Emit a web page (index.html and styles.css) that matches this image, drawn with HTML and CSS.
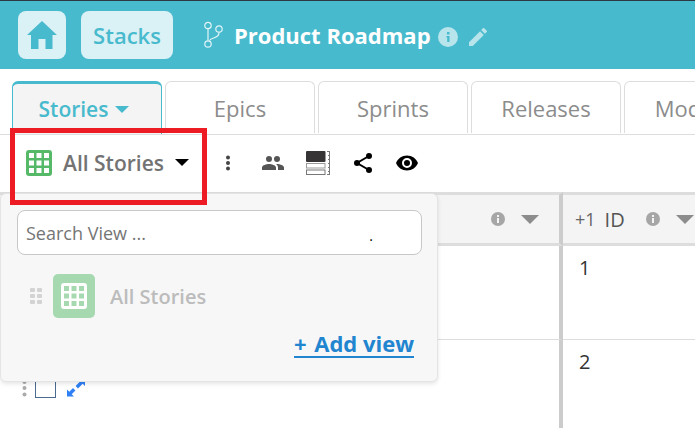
FILE: index.html
```html
<!DOCTYPE html>
<html lang="en">
<head>
  <meta charset="UTF-8">
  <title>Product Roadmap</title>
  <meta name="viewport" content="width=device-width, initial-scale=1.0">
  <link rel="stylesheet" href="styles.css">
</head>
<body>
  <header class="topbar">
    <button class="top-btn home-btn" aria-label="Home">
      <svg width="30" height="28" viewBox="0 0 30 28"><path fill="#48bacd" d="M15 0 L30 14 H25.500 V28 H18.500 V18 H11.500 V28 H4 V14 H0 Z"/></svg>
    </button>
    <button class="top-btn stacks-btn">Stacks</button>
    <svg class="branch" width="21" height="28" viewBox="0 0 21 28" fill="none" stroke="#e2f5f8" stroke-width="1.200">
      <circle cx="5" cy="4.500" r="3.200"/><circle cx="16" cy="8" r="3.200"/><circle cx="5" cy="23" r="3.200"/>
      <path d="M5 8 V19.500 M6.500 19.500 C8.500 16 16 18 16 11.500"/>
    </svg>
    <h1 class="title">Product Roadmap</h1>
    <button class="icon-btn info-btn" aria-label="Info">
      <svg width="20" height="20" viewBox="0 0 20 20"><circle cx="10" cy="10" r="10" fill="#b8e4eb"/><path fill="#48bacd" d="M9 5h2.500v2.500H9z M8.500 9h3v6H9.200v-4.500h-.7z"/></svg>
    </button>
    <button class="icon-btn" aria-label="Rename">
      <svg width="18" height="18" viewBox="3 3 18 18"><path fill="#b8e4eb" d="M3 17.250V21h3.750L17.810 9.940l-3.750-3.750L3 17.250zM20.710 7.040a1 1 0 0 0 0-1.410l-2.340-2.340a1 1 0 0 0-1.410 0l-1.830 1.830 3.750 3.750 1.830-1.830z"/></svg>
    </button>
  </header>

  <nav class="tabs">
    <button class="tab active">Stories <span class="caret"></span></button>
    <button class="tab">Epics</button>
    <button class="tab">Sprints</button>
    <button class="tab">Releases</button>
    <button class="tab">Modules</button>
  </nav>

  <div class="toolbar">
    <button class="view-btn">
      <svg width="26" height="26" viewBox="0 0 26 26"><rect width="26" height="26" rx="3" fill="#56b968"/><path fill="#fff" d="M3 3h5v5H3zM10.500 3h5v5h-5zM18 3h5v5h-5zM3 10.500h5v5H3zM10.500 10.500h5v5h-5zM18 10.500h5v5h-5zM3 18h5v5H3zM10.500 18h5v5h-5zM18 18h5v5h-5z"/></svg>
      <span>All Stories</span>
      <span class="caret"></span>
    </button>
    <div class="tools">
      <button class="icon-btn" aria-label="More">
        <svg width="24" height="24" viewBox="0 0 24 24" fill="#444"><circle cx="12" cy="6.500" r="2"/><circle cx="12" cy="12" r="2"/><circle cx="12" cy="17.500" r="2"/></svg>
      </button>
      <button class="icon-btn" aria-label="Members">
        <svg width="24" height="24" viewBox="0 0 24 24" fill="#555"><path d="M16 11a3 3 0 1 0 0-6 3 3 0 0 0 0 6zM8 11a3 3 0 1 0 0-6 3 3 0 0 0 0 6zM8 13c-2.330 0-7 1.170-7 3.500V19h14v-2.500C15 14.170 10.330 13 8 13zM16 13c-.29 0-.62.020-.97.050 1.160.84 1.970 1.970 1.970 3.450V19h6v-2.500c0-2.330-4.670-3.500-7-3.500z"/></svg>
      </button>
      <button class="icon-btn" aria-label="Row height">
        <svg width="24" height="24" viewBox="0 0 24 24"><rect width="19.500" height="11" rx="1" fill="#373435"/><rect x=".5" y="12.500" width="18.500" height="4.500" fill="#fff" stroke="#999"/><rect x=".5" y="19" width="18.500" height="4.500" fill="#fff" stroke="#777"/><path stroke="#777" fill="none" d="M23.500 0V24M21 .5h3M21 23.500h3M22 4.500h2M22 8.500h2M22 12.500h2M22 16.500h2M22 20.500h2"/></svg>
      </button>
      <button class="icon-btn" aria-label="Share">
        <svg width="24" height="24" viewBox="0 0 24 24"><path d="M18 5 L6 12 L18 19" fill="none" stroke="#000" stroke-width="2"/><circle cx="18" cy="5" r="3"/><circle cx="6" cy="12" r="3"/><circle cx="18" cy="19" r="3"/></svg>
      </button>
      <button class="icon-btn" aria-label="Visibility">
        <svg width="22" height="22" viewBox="1 1 22 22"><path d="M12 4.500C7 4.500 2.730 7.610 1 12c1.730 4.390 6 7.500 11 7.500s9.270-3.110 11-7.500c-1.730-4.390-6-7.500-11-7.500zM12 17a5 5 0 1 1 0-10 5 5 0 0 1 0 10zm0-8a3 3 0 1 0 0 6 3 3 0 0 0 0-6z"/></svg>
      </button>
    </div>

    <div class="view-menu">
      <div class="search">
        <input type="text" class="search-input" placeholder="Search View ..." aria-label="Search View">
        <span class="search-mark">.</span>
      </div>
      <div class="view-item">
        <svg class="grip" width="12" height="16" viewBox="0 0 12 16" fill="#d3d3d3"><rect width="5" height="4" rx="1"/><rect x="7" width="5" height="4" rx="1"/><rect y="6" width="5" height="4" rx="1"/><rect x="7" y="6" width="5" height="4" rx="1"/><rect y="12" width="5" height="4" rx="1"/><rect x="7" y="12" width="5" height="4" rx="1"/></svg>
        <span class="view-icon">
          <svg width="26" height="26" viewBox="0 0 26 26"><rect width="26" height="26" rx="3" fill="#fff"/><path fill="#a7d9b1" d="M3 3h5v5H3zM10.500 3h5v5h-5zM18 3h5v5h-5zM3 10.500h5v5H3zM10.500 10.500h5v5h-5zM18 10.500h5v5h-5zM3 18h5v5H3zM10.500 18h5v5h-5zM18 18h5v5h-5z"/></svg>
        </span>
        <span>All Stories</span>
      </div>
      <a class="add-view" href="#"><span class="plus">+</span> Add view</a>
    </div>
    <div class="highlight"></div>
  </div>

  <table class="grid">
    <thead>
      <tr>
        <th class="main-col">
          <div class="head">
            <svg width="14" height="14" viewBox="0 0 14 14"><circle cx="7" cy="7" r="7" fill="#a6a6a6"/><path fill="#f4f4f4" d="M6 3h2v2H6zM6 6h2v5H6z"/></svg>
            <span class="caret"></span>
          </div>
        </th>
        <th class="id-col">
          <div class="head">
            <span class="counter">+1</span>
            <span class="name">ID</span>
            <svg width="14" height="14" viewBox="0 0 14 14"><circle cx="7" cy="7" r="7" fill="#a6a6a6"/><path fill="#f4f4f4" d="M6 3h2v2H6zM6 6h2v5H6z"/></svg>
            <span class="caret"></span>
          </div>
        </th>
      </tr>
    </thead>
    <tbody>
      <tr>
        <td class="main-col"></td>
        <td class="id-col">1</td>
      </tr>
      <tr>
        <td class="main-col">
          <div class="row-tools">
            <svg width="5" height="18" viewBox="0 0 5 18" fill="#aaa"><circle cx="2.500" cy="3" r="2"/><circle cx="2.500" cy="9" r="2"/><circle cx="2.500" cy="15.500" r="2"/></svg>
            <input type="checkbox" class="row-check" aria-label="Select row 2">
            <svg class="expand" width="18" height="18" viewBox="0 0 18 18" fill="#2f80f5"><path d="M18 0v7l-2.300-2.300-4.700 4.700-2.400-2.400 4.700-4.700L11 0zM0 17.500v-7l2.300 2.300 3.700-3.700 2.400 2.400-3.700 3.700L7 17.500z"/></svg>
          </div>
        </td>
        <td class="id-col">2</td>
      </tr>
    </tbody>
  </table>
</body>
</html>
```
FILE: styles.css
```css
* { box-sizing: border-box; }

body {
  margin: 0;
  font-family: 'Segoe UI', 'Open Sans', 'Noto Sans', sans-serif;
  font-size: 20px;
  color: #333;
  background: #fff;
  overflow: hidden;
}

button {
  font: inherit;
  color: inherit;
  border: none;
  padding: 0;
  background: none;
  cursor: pointer;
}

svg {
  display: block;
  flex: none;
}

.icon-btn {
  display: flex;
}

.caret {
  flex: none;
  border: 7px solid transparent;
  border-top-color: currentColor;
  border-bottom: 0;
}

/* header */
.topbar {
  display: flex;
  align-items: center;
  height: 69px;
  padding: 0 18px;
  background: #48bacd;
  border-top: 1px solid #2b3a42;
}

.top-btn {
  display: flex;
  align-items: center;
  justify-content: center;
  height: 48px;
  border-radius: 8px;
  background: #daf1f6;
  color: #48bacd;
  font-size: 22px;
  font-weight: 600;
}

.home-btn {
  width: 48px;
  margin-right: 15px;
}

.stacks-btn {
  width: 92px;
  margin-right: 30px;
}

.branch {
  margin-right: 10px;
}

.title {
  margin: 0 7px 0 0;
  font-size: 22px;
  font-weight: 700;
  color: #fff;
  white-space: nowrap;
}

.info-btn {
  margin-right: 11px;
}

.info-btn,
.info-btn + .icon-btn {
  padding-top: 3px;
}

/* tabs */
.tabs {
  display: flex;
  gap: 3px;
  height: 66px;
  padding: 12px 0 0 12px;
  border-bottom: 1px solid #ddd;
  overflow: hidden;
}

.tab {
  display: flex;
  flex: none;
  align-items: center;
  justify-content: center;
  gap: 7px;
  width: 150px;
  height: 52px;
  border: 1px solid #ddd;
  border-bottom: none;
  border-radius: 6px 6px 0 0;
  color: #8c8c8c;
  font-size: 22px;
  font-weight: 500;
}

.tab.active {
  height: 53px;
  border-color: #48bacd;
  border-top-width: 3px;
  padding-right: 6px;
  background: #f4f4f4;
  color: #48bacd;
  font-size: 21px;
  font-weight: 600;
}

/* toolbar */
.toolbar {
  position: relative;
  display: flex;
  align-items: center;
  gap: 27px;
  height: 57px;
  padding: 0 0 2px 26px;
}

.view-btn {
  display: flex;
  align-items: center;
  gap: 11px;
  color: #737373;
  font-size: 21px;
  font-weight: 600;
}

.view-btn .caret {
  color: #000;
}

.tools {
  display: flex;
  align-items: center;
  gap: 21px;
}

.highlight {
  position: absolute;
  top: -7px;
  left: 10px;
  width: 197px;
  height: 77px;
  border: 5px solid #ed1c24;
  z-index: 3;
  pointer-events: none;
}

/* view drop-down */
.view-menu {
  position: absolute;
  top: 58px;
  left: 0;
  width: 438px;
  padding: 16px 15px 23px 16px;
  border: 1px solid #e4e4e4;
  border-radius: 6px;
  background: #f7f7f7;
  box-shadow: 0 2px 4px rgba(0,0,0,0.1);
  z-index: 2;
}

.search {
  position: relative;
}

.search-input {
  display: block;
  width: 100%;
  height: 45px;
  padding: 0 8px;
  border: 1px solid #c8c8c8;
  border-radius: 8px;
  background: #fff;
  font: inherit;
  font-size: 18px;
}

.search-input::placeholder {
  color: #757575;
}

.search-mark {
  position: absolute;
  top: 16px;
  right: 49px;
  color: #000;
  font-size: 14px;
  line-height: 20px;
}

.view-item {
  display: flex;
  align-items: center;
  height: 44px;
  margin-top: 19px;
  padding-left: 13px;
  color: #bcbcbc;
  font-weight: 600;
}

.view-icon {
  display: flex;
  align-items: center;
  justify-content: center;
  width: 42px;
  height: 44px;
  margin: 0 15px 0 11px;
  border-radius: 5px;
  background: #a7d9b1;
}

.add-view {
  display: block;
  width: fit-content;
  margin: 12px 8px 0 auto;
  border-bottom: 2px solid #2185d0;
  color: #2185d0;
  font-size: 22px;
  font-weight: 700;
  line-height: 26px;
  text-decoration: none;
}

.plus {
  padding-right: 2px;
}

/* grid */
.grid {
  width: 100%;
  table-layout: fixed;
  border-collapse: separate;
  border-spacing: 0;
}

.grid th {
  height: 54px;
  padding: 0;
  border-top: 3px solid #ddd;
  border-bottom: 3px solid #ddd;
  background: #f4f4f4;
}

.grid td {
  height: 94px;
  padding: 8px 16px;
  border-bottom: 1px solid #ddd;
  line-height: 28px;
  vertical-align: top;
}

.grid .main-col {
  width: 563px;
  border-right: 4px solid #ccc;
}

.grid td.main-col {
  padding: 2px 22px 0;
  vertical-align: middle;
}

.head {
  display: flex;
  align-items: center;
  color: #8c8c8c;
}

.main-col .head {
  justify-content: flex-end;
  gap: 16px;
  padding-right: 20px;
}

.id-col .head {
  padding-left: 12px;
}

.head .caret {
  border-width: 9px;
  border-bottom: 0;
}

.counter {
  margin-right: 9px;
  color: #666;
  font-size: 18px;
  font-weight: 400;
}

.name {
  margin-right: 21px;
  color: #555;
  font-weight: 500;
}

.id-col .caret {
  margin-left: 16px;
}

.row-tools {
  display: flex;
  align-items: center;
  gap: 8px;
}

.row-check {
  appearance: none;
  width: 21px;
  height: 21px;
  margin: 0;
  border: 1px solid #4a6a8f;
  background: #fff;
}

.expand {
  margin-left: 3px;
}
```
